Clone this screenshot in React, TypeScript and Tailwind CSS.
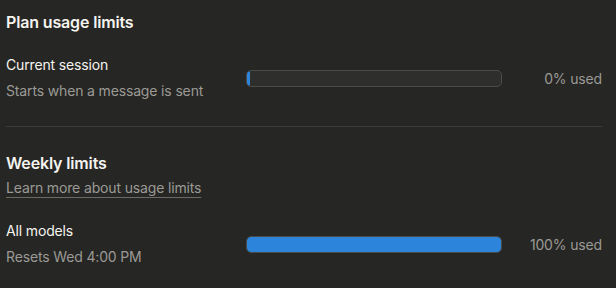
import React from 'react'

interface UsageRowProps {
  title: string
  subtitle: string
  percent: number
}

function UsageRow({ title, subtitle, percent }: UsageRowProps) {
  return (
    <div className="flex items-center">
      <div className="flex w-[240px] flex-col gap-[6px]">
        <div className="text-[14px] leading-[20px] text-[#f5f4ef]">{title}</div>
        <div className="text-[14px] leading-[20px] text-[#9b9a95]">{subtitle}</div>
      </div>
      <div className="h-[17px] w-[256px] overflow-hidden rounded-[5px] border border-[#4a4a47] bg-[#2e2e2c]">
        <div
          className="h-full rounded-[4px] bg-[#2c84db]"
          style={{ width: percent === 0 ? '3px' : `${percent}%` }}
        />
      </div>
      <div className="flex-1 text-right text-[14px] text-[#9b9a95]">{percent}% used</div>
    </div>
  )
}

export default function App() {
  return (
    <div
      className="min-h-[288px] w-[616px] bg-[#262624] pl-[6px] pr-[14px] pt-[10px] tracking-[-0.15px]"
      style={{ fontFamily: 'Inter, "Noto Sans", sans-serif' }}
    >
      <h2 className="text-[16px] font-semibold leading-[24px] text-[#f5f4ef]">Plan usage limits</h2>
      <div className="mt-[21px]">
        <UsageRow title="Current session" subtitle="Starts when a message is sent" percent={0} />
      </div>
      <div className="mt-[25px] h-px bg-[#3d3d3a]" />
      <h2 className="mt-[24px] text-[16px] font-semibold leading-[24px] text-[#f5f4ef]">Weekly limits</h2>
      <a
        href="#"
        className="mt-[2px] inline-block text-[14px] leading-[20px] text-[#9b9a95] underline decoration-[#6b6a66] underline-offset-[4px]"
      >
        Learn more about usage limits
      </a>
      <div className="mt-[22px]">
        <UsageRow title="All models" subtitle="Resets Wed 4:00 PM" percent={100} />
      </div>
    </div>
  )
}
